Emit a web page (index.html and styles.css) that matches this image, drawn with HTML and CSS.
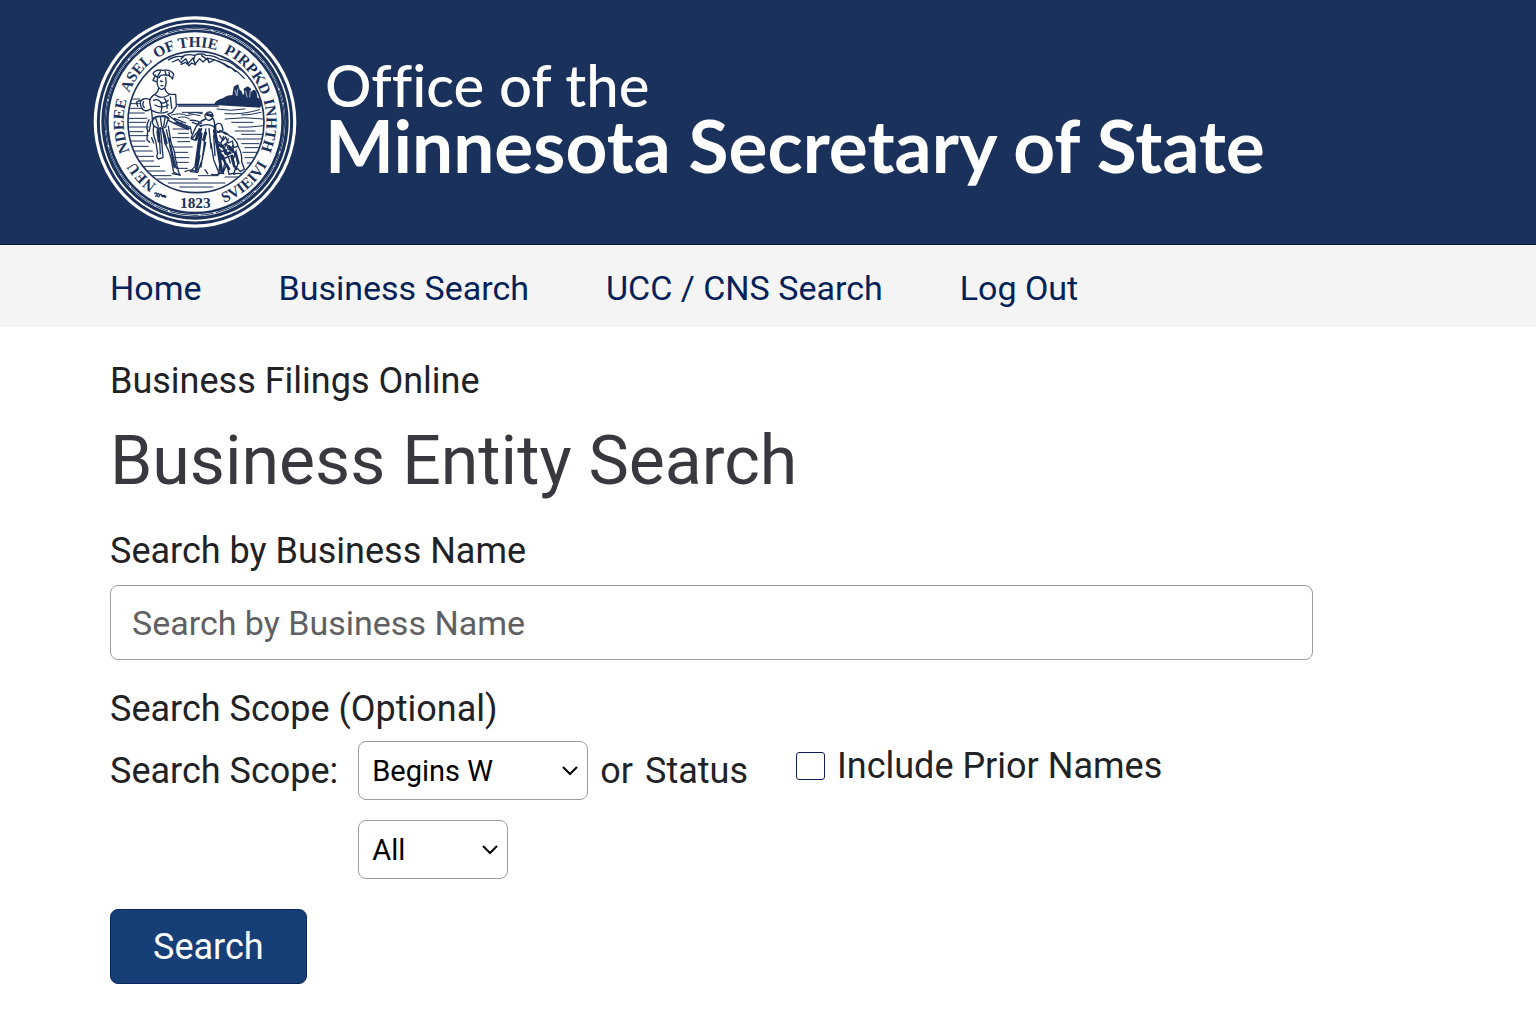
FILE: index.html
```
<!DOCTYPE html>
<html lang="en">
<head>
  <meta charset="UTF-8" />
  <meta name="viewport" content="width=device-width, initial-scale=1.0" />
  <title>Business Entity Search</title>
  <link rel="stylesheet" href="styles.css">
</head>
<body>
  <header class="banner">
    <svg class="seal" viewBox="24 30 612 642" role="img" aria-label="State seal">
      <defs>
        <path id="ringUp" pathLength="360" d="M330 574 A214 224 0 0 1 330 126 A214 224 0 0 1 330 574" />
        <path id="ringDown" pathLength="360" d="M330 610 A250 260 0 0 0 330 90 A250 260 0 0 0 330 610" />
        <clipPath id="inner"><ellipse cx="333" cy="351" rx="203" ry="211" /></clipPath>
      </defs>

      <!-- rings -->
      <ellipse cx="330" cy="351" rx="304" ry="317" fill="#fff" />
      <g fill="none" stroke="#1a315c">
        <ellipse cx="330" cy="351" rx="290" ry="303" stroke-width="9" />
        <ellipse cx="330" cy="351" rx="276" ry="288" stroke-width="10" />
        <ellipse cx="330" cy="351" rx="269" ry="280" stroke-width="3" stroke-dasharray="90 6 40 3" />
        <ellipse cx="330" cy="351" rx="263" ry="273" stroke-width="8" />
        <ellipse cx="333" cy="351" rx="204" ry="212" stroke-width="5" />
      </g>

      <!-- lettering -->
      <g class="seal-text">
        <text><textPath href="#ringUp" startOffset="32">NEU</textPath></text>
        <text><textPath href="#ringUp" startOffset="66">NDEEE</textPath></text>
        <text><textPath href="#ringUp" startOffset="113">ASEL</textPath></text>
        <text><textPath href="#ringUp" startOffset="148">OF THIE</textPath></text>
        <text><textPath href="#ringUp" startOffset="203">PIRPKD</textPath></text>
        <text><textPath href="#ringUp" startOffset="253">INHTH</textPath></text>
        <text><textPath href="#ringDown" startOffset="20">SVIEIVI</textPath></text>
        <text x="331" y="610" text-anchor="middle">1823</text>
      </g>
      <path d="M208 566q6-6 8 3q4-9 8 2q4-8 8 3q4-6 12 1M210 574q8-5 12 3m6-4q6-2 14 5" fill="none" stroke="#1a315c" stroke-width="4" />

      <!-- scene -->
      <g clip-path="url(#inner)" fill="none" stroke="#1a315c" stroke-width="4" stroke-linecap="round" stroke-linejoin="round">
        <path d="M250 165q20-14 40-10q18-10 38-4q20-8 36 0q24 0 40 12q34 4 54 26q24 12 36 32M262 171l18-8 8 10 14-12 8 14 14-16 6 18 14-16 10 10 14-12 4 14 16-8M288 178l14-6 10 10 8-8 12 6M372 160q34 8 60 28M400 168q30 12 52 32M436 186q24 14 42 34M350 152l20 14M300 150l-12 12M330 150l-4 16" />
        <path d="M276 298H532M280 303H400" stroke-width="4" />
        <path d="M390 298q4-12 24-16q12-10 30-10l4-26 10-6 4 14 6 6 6 14 6-8-2-14 10-6 8 6 2 14 8-10 6 4 4 20 10 4 4 14-6 8z" fill="#1a315c" />
        <path d="M450 256l4 14m4-18l-2 20m26-14l4 18m10-20l-2 20" stroke="#fff" stroke-width="2" />
        <path d="M292 322h60m44-10q40 8 84 0m-60 14q50 4 104-12M470 330q30 0 58-8M420 342q60-8 116 0M440 352h64M460 366q30 2 74-4M450 378h60M470 388h60M456 402h74M470 416h52M480 428h46M474 442h44M480 458h30M486 474h22M260 330q28-8 46 2q20-8 40 0M280 338q20-6 34 4M310 326q20-8 42 0M268 354h24M264 372h44M280 385h30M262 398h50M278 410h36M262 426h60M270 442h38M266 458h46M272 472h38M278 490h30" stroke-width="3" />
        <path d="M134 282h30M136 296h28M132 310h40M130 324h48M130 340h56M132 352h50M132 366h58M134 380h40M136 392h54M136 408h44M140 424h50M146 438h56M152 454h54M160 468h46M164 484h60M176 498h64M188 512h70M218 522h120M250 534h170M284 546h100M340 512h60M420 516h42" stroke-width="3" />

        <!-- standing figure -->
        <path d="M204 206q8-14 30-10q24-4 32 12l-4 14q-8-14-22-12q-14-2-18 8q-14-4-18-12zM212 210l-8 16 10 4M226 200l-8 14M240 198l4 14M252 202l2 12M218 218q-4 16 2 28q8 12 18 4q8-12 4-32M226 228l6 2m-4 12h6M222 248q-2 12-12 20q-16 8-16 24l6 28 2 20M240 250q2 12 14 18l18 0 2 36-12 18-14 6M212 270q16 14 40 0M206 286q12-6 20 4t24-4M210 300q20 12 40 0M200 316q24 14 48 4M226 290q8 14 2 30M238 280q10 10 8 30M256 276l4 34M196 284q-22-8-30 6q0 20 12 26q10 4 18-4M176 290q-6 10 2 18M164 286l-10 6 4 12M202 340q-2 14 6 24q20 12 34 2l8-26q-22-12-48 0z" />
        <path d="M204 346q6-14 22-12q16-6 26 8M212 340l8 24M226 336l4 28M240 340l-4 24" />
        <path d="M206 362q-4 26 6 46l6 38q-6 10 2 16l14-4-4-50-4-40M232 366q4 30 8 50q14 24 18 44l8 42 18 8-4-12-8-34q-2-26-14-52l-8-48M222 372l4 74M244 374l12 54 12 60M238 384l8 30M216 380l4 30M252 400l4 30M192 344q-10 20-4 34l-2 26 8 8M198 350l-6 30M250 330q20 18 36 24l30 12 4 20M250 346q26 14 60 28M268 340l34 14M200 398l6 16M262 460l12 30" />
        <path d="M218 372l6 40M234 376l10 40M256 422l14 60M274 352l38 18" stroke-width="6" />

        <!-- stooping figures -->
        <path d="M368 322q14-4 16 10q-2 14-14 14q-12-6-10-16zM362 342q-24 8-34 34l-10 24M384 340q8 16 4 34M346 364q20-10 40 0q10 24 12 50l8 70 10 22-14-2-16-40-8-50M350 370q-10 30-12 54l-8 60-14 16 22 2 14-40 10-50M362 372l-6 60-8 54M372 370l6 60M386 392l4 60M338 380l-18 22 12 4M322 352l26 10M316 346q20-2 34 10M340 440l-6 40" />
        <path d="M366 328l14 4M344 374l-10 28M348 386l-12 90M362 384l-6 20M388 378l10 50M398 428l12 70M342 452l-8 42" stroke-width="9" />
        <path d="M392 360q10-10 18 0l4 14-10 8-12-6zM396 382q22-6 36 10q22 8 28 34q12 20 10 44l8 22-12 8-14-16-4 20-16 4-6-30-12 24-12 4 2-30M404 392l10 14 8-10 8 18 12-6 4 20 12-4M400 410l14 12 10-8 6 20 14-4 6 22M400 430l12 10 12-6 4 22 14-6 6 26M408 448l12 12 10-6 6 20M416 394l-8 20M430 402l-10 24M444 420l-14 28M454 436l-12 34M420 470l-6 30M460 470l-6 24M404 376l20 12" />
        <path d="M402 420l14 8 6 18 14-2M412 452l8 20M432 424l12 16M440 456l8 28M424 478l8 14M452 444l8 30M404 440l8 22" stroke-width="8" />
        <path d="M300 500q20-10 36 2M380 508q12 4 24-2M446 508q14-6 26 0M262 506l24 4M360 494l8 12" />
      </g>
    </svg>
    <div class="banner-title">
      <span class="office">Office of the</span>
      <span class="state">Minnesota Secretary of State</span>
    </div>
  </header>

  <nav class="menu">
    <a href="#">Home</a>
    <a href="#">Business Search</a>
    <a href="#">UCC / CNS Search</a>
    <a href="#">Log Out</a>
  </nav>

  <main class="content">
    <p class="section-name">Business Filings Online</p>
    <h1>Business Entity Search</h1>
    <form onsubmit="return false;">
      <label class="name-label" for="businessName">Search by Business Name</label>
      <input type="text" class="name-input" id="businessName" placeholder="Search by Business Name" />

      <p class="scope-title">Search Scope (Optional)</p>
      <div class="scope">
        <label for="scope">Search Scope:</label>
        <div class="scope-row">
          <div class="select-box">
            <select id="scope" class="select wide">
              <option>Begins W</option>
              <option>Contains</option>
            </select>
            <svg class="chevron" viewBox="0 0 18 12"><path d="M2 2l7 7 7-7" /></svg>
          </div>
          <span class="or">or</span>
          <label for="status">Status</label>
          <div class="prior">
            <input type="checkbox" id="prior" />
            <label for="prior">Include Prior Names</label>
          </div>
        </div>
        <div class="select-box status-box">
          <select id="status" class="select">
            <option>All</option>
            <option>Active</option>
          </select>
          <svg class="chevron" viewBox="0 0 18 12"><path d="M2 2l7 7 7-7" /></svg>
        </div>
      </div>
      <button type="submit">Search</button>
    </form>
  </main>
</body>
</html>
```
FILE: styles.css
```
body {
  margin: 0;
  background: #fff;
  color: #212225;
  font-family: Roboto, sans-serif;
  font-size: 36px;
  line-height: 44px;
}
.banner {
  display: flex;
  align-items: flex-start;
  gap: 28px;
  padding: 15px 93px;
  background: #1a315c;
  border-bottom: 1px solid #0a1240;
  color: #fff;
}
.seal {
  flex: none;
  width: 204px;
  height: 214px;
}
.seal-text {
  fill: #1a315c;
  font-family: "Liberation Serif", serif;
  font-weight: bold;
  font-size: 46px;
}
.banner-title {
  display: flex;
  flex-direction: column;
  padding-top: 40px;
  font-family: Lato, sans-serif;
}
.office {
  font-size: 58px;
  font-weight: 500;
  line-height: 60px;
  font-variant-ligatures: none;
}
.state {
  font-size: 73px;
  font-weight: bold;
  line-height: 60px;
}
.menu {
  display: flex;
  gap: 77px;
  padding: 21px 110px 18px;
  background: #f4f4f4;
  border-top: 1px solid #fff;
}
.menu a {
  color: #04215a;
  font-size: 34px;
  line-height: 42px;
  text-decoration: none;
}
.content {
  padding: 32px 223px 40px 110px;
}
.section-name {
  margin: 0;
}
h1 {
  margin: 18px 0 28px;
  color: #37393f;
  font-size: 68px;
  font-weight: normal;
  line-height: 80px;
}
.name-label {
  display: block;
  margin-bottom: 12px;
}
.name-input {
  display: block;
  box-sizing: border-box;
  width: 100%;
  height: 75px;
  padding: 0 21px;
  border: 1px solid #9c9c9c;
  border-radius: 8px;
  font-family: inherit;
  font-size: 34px;
}
.name-input::placeholder {
  color: #5f6063;
}
.scope-title {
  margin: 27px 0 10px;
}
.scope {
  display: grid;
  grid-template-columns: auto 1fr;
  align-items: center;
  gap: 20px;
}
.scope-row {
  display: flex;
  align-items: center;
  gap: 12px;
}
.select-box {
  position: relative;
  width: max-content;
}
.status-box {
  grid-column: 2;
}
.select {
  display: block;
  appearance: none;
  width: 150px;
  height: 59px;
  padding: 0 13px;
  border: 1px solid #9c9c9c;
  border-radius: 8px;
  background: #fff;
  color: #000;
  font-family: inherit;
  font-size: 29px;
}
.select.wide {
  width: 230px;
}
.chevron {
  position: absolute;
  right: 9px;
  top: 24px;
  width: 18px;
  height: 12px;
  fill: none;
  stroke: #000;
  stroke-width: 2;
  pointer-events: none;
}
.prior {
  display: flex;
  align-items: center;
  gap: 12px;
  margin-left: 36px;
  padding-bottom: 10px;
}
.prior input {
  appearance: none;
  width: 29px;
  height: 28px;
  margin: 0;
  border: 1px solid #14205c;
  border-radius: 3px;
}
button {
  display: block;
  margin-top: 30px;
  padding: 0 42px;
  height: 75px;
  border: 1px solid #0a2760;
  border-radius: 8px;
  background: #173f77;
  color: #fff;
  font-family: inherit;
  font-size: 36px;
}
```
